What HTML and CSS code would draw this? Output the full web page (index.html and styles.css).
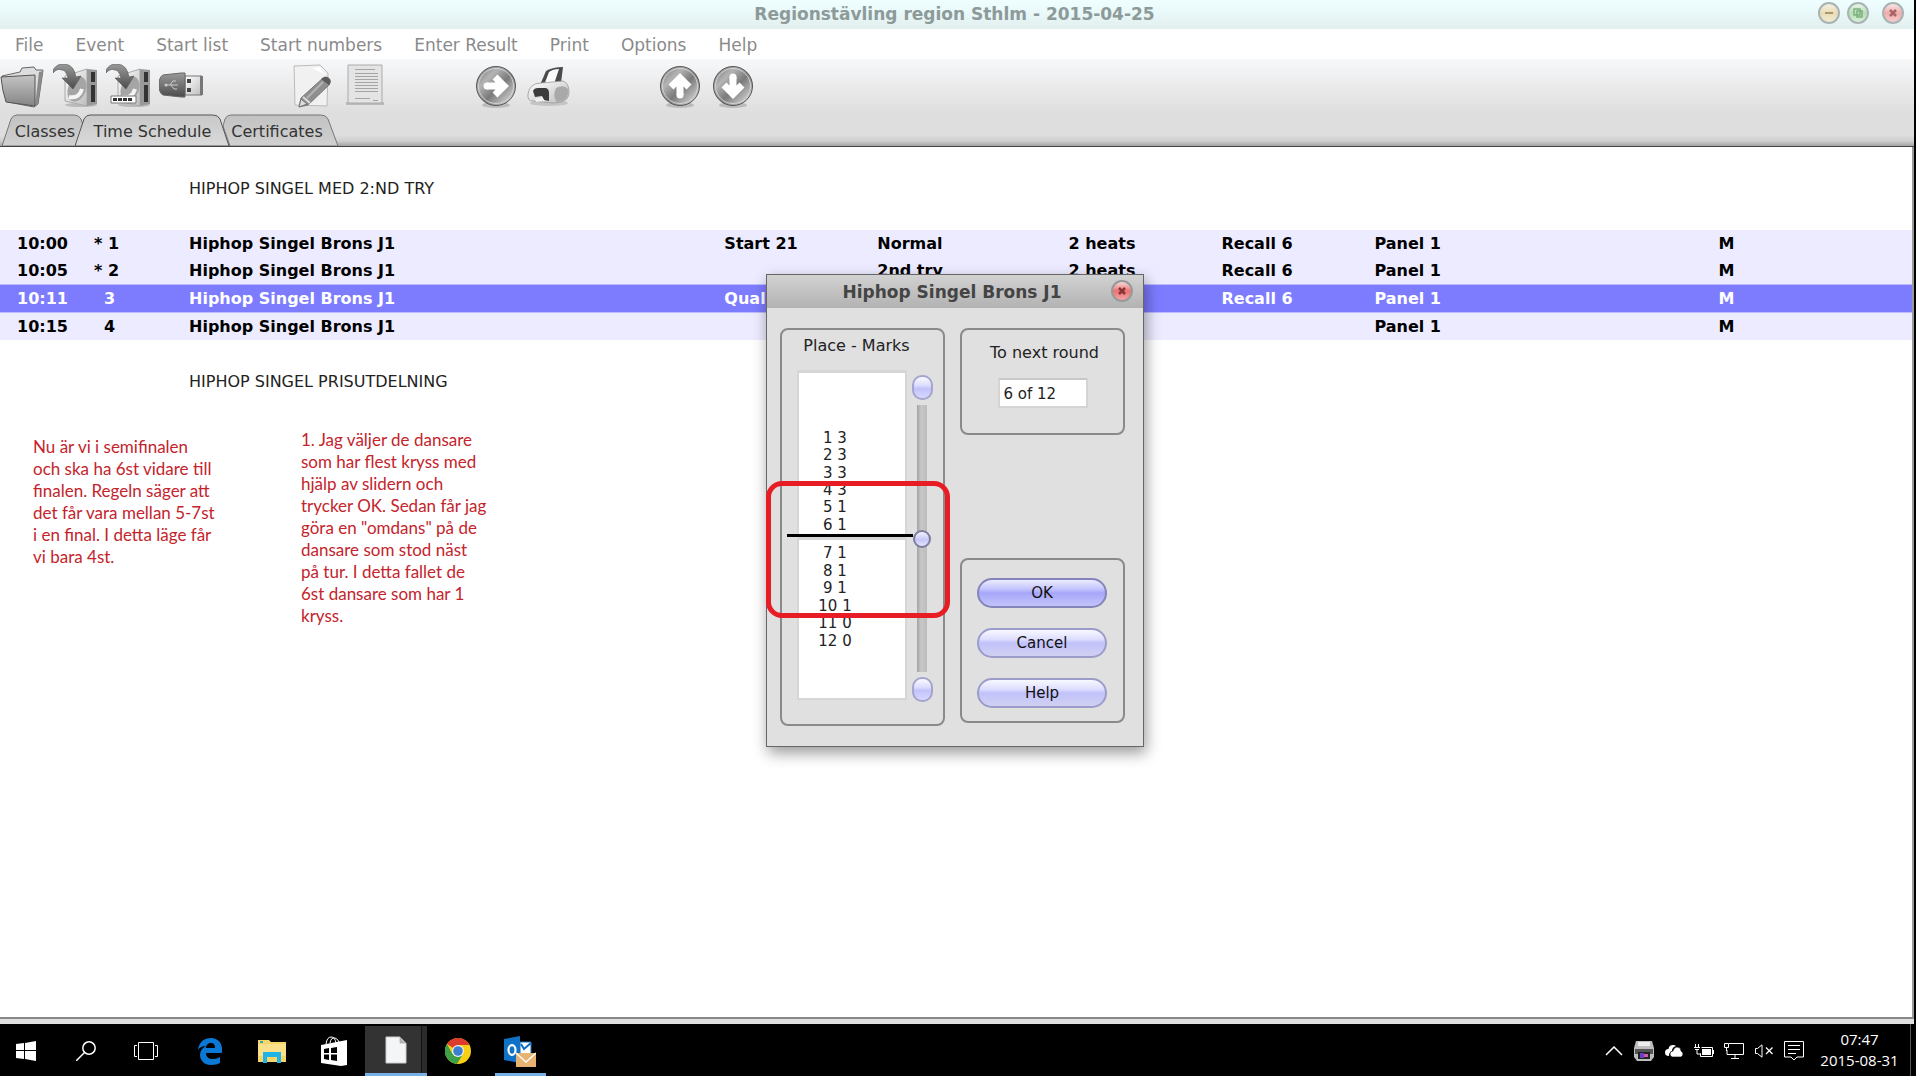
FILE: index.html
```html
<!DOCTYPE html>
<html lang="sv">
<head>
<meta charset="utf-8">
<title>Regionstävling region Sthlm - 2015-04-25</title>
<link rel="stylesheet" href="styles.css">
</head>
<body>
<svg class="defs" aria-hidden="true">
  <defs>
    <linearGradient id="g-dark" x1="0" y1="0" x2="0" y2="1"><stop offset="0" stop-color="#9a9a9a"/><stop offset="1" stop-color="#4c4c4c"/></linearGradient>
    <linearGradient id="g-folder" x1="0" y1="0" x2="0" y2="1"><stop offset="0" stop-color="#c4c4c4"/><stop offset="1" stop-color="#858585"/></linearGradient>
    <linearGradient id="g-light" x1="0" y1="0" x2="1" y2="1"><stop offset="0" stop-color="#fff"/><stop offset="1" stop-color="#bdbdbd"/></linearGradient>
    <linearGradient id="g-ball" x1="0" y1="0" x2="1" y2="1"><stop offset="0" stop-color="#6f6f6f"/><stop offset=".3" stop-color="#b4b4b4"/><stop offset=".55" stop-color="#7a7a7a"/><stop offset=".85" stop-color="#c8c8c8"/><stop offset="1" stop-color="#777"/></linearGradient>
    <linearGradient id="g-tab" x1="0" y1="0" x2="0" y2="1"><stop offset="0" stop-color="#c2c2c2"/><stop offset="1" stop-color="#d0d0d0"/></linearGradient>
    <linearGradient id="g-tab-on" x1="0" y1="0" x2="0" y2="1"><stop offset="0" stop-color="#c8c8c8"/><stop offset="1" stop-color="#dadada"/></linearGradient>
    <symbol id="i-disk" viewBox="0 0 44 44">
      <ellipse cx="28" cy="41" rx="16" ry="2" fill="#bbb"/>
      <path d="M12 12 34 5 34 42 12 37Z" fill="url(#g-light)" stroke="#aaa"/>
      <path d="M34 5 44 6 44 40 34 42Z" fill="#999"/>
      <path d="M38 8h4v10h-4zM38 21h4v17h-4z" fill="#333"/>
      <ellipse cx="24" cy="25" rx="9" ry="13" fill="#a5a5a5" transform="rotate(20 24 25)"/>
      <path d="M16 33q10 2 13-8" fill="none" stroke="#f4f4f4" stroke-width="4"/>
      <path d="M0 6Q4-1 12 0q9 1 11 13l5-1-8 13L9 14l6 0Q13 6 9 6 4 4 0 9Z" fill="url(#g-dark)" stroke="#555" stroke-width=".6"/>
    </symbol>
    <symbol id="i-ball" viewBox="0 0 44 44">
      <ellipse cx="22" cy="41" rx="14" ry="3" fill="#bbb"/>
      <circle cx="22" cy="22" r="19.500" fill="url(#g-ball)" stroke="#555"/>
      <circle cx="22" cy="22" r="17.500" fill="none" stroke="#d2d2d2"/>
    </symbol>
  </defs>
</svg>

<div class="screen">
  <main class="window">
    <header class="titlebar">
      <h1>Regionstävling region Sthlm - 2015-04-25</h1>
      <div class="window-buttons">
        <button class="ball ball-min" aria-label="Minimize"><svg viewBox="0 0 22 22"><path d="M7 11h8" stroke="#a89a6c" stroke-width="2"/></svg></button>
        <button class="ball ball-max" aria-label="Restore"><svg viewBox="0 0 22 22" fill="none" stroke="#7fae7f" stroke-width="1.500"><rect x="7" y="7" width="6" height="6"/><rect x="10" y="9" width="5" height="6"/></svg></button>
        <button class="ball ball-close" aria-label="Close"><svg viewBox="0 0 22 22"><path d="M8 8l6 6M14 8l-6 6" stroke="#a86464" stroke-width="2.500"/></svg></button>
      </div>
    </header>

    <nav class="menubar">
      <a href="#">File</a><a href="#">Event</a><a href="#">Start list</a><a href="#">Start numbers</a><a href="#">Enter Result</a><a href="#">Print</a><a href="#">Options</a><a href="#">Help</a>
    </nav>

    <div class="tools">
      <div class="toolbar">
        <div class="tool-group">
          <button class="tool" aria-label="Open"><svg viewBox="0 0 44 44"><path d="M2 12 20 8 22 4 34 3 36 6 43 6 38 40 34 43 8 38Z" fill="#ddd" stroke="#666"/><path d="M39 8 43 7 38 40 35 42Z" fill="#8a8a8a"/><path d="M1 13 35 11 35 42 6 38Q2 26 1 13Z" fill="url(#g-folder)" stroke="#555"/></svg></button>
          <button class="tool" aria-label="Save"><svg viewBox="0 0 44 44"><use href="#i-disk"/></svg></button>
          <button class="tool" aria-label="Save as"><svg viewBox="0 0 44 44"><use href="#i-disk"/><path d="M5 32h25v7H5z" fill="#fff" stroke="#777"/><path d="M7 35.500h20" stroke="#333" stroke-width="3" stroke-dasharray="4 1"/></svg></button>
          <button class="tool" aria-label="Save to USB"><svg viewBox="0 0 44 44"><path d="M26 12h17v19H26z" fill="url(#g-light)" stroke="#777"/><path d="M41 12h3v19h-3z" fill="#777"/><path d="M28 15h4v4h-4zM28 24h4v4h-4z" fill="#444"/><path d="M4 11 22 9h4v24h-4L4 31Q0 29 0 21T4 11Z" fill="url(#g-dark)" stroke="#666"/><path d="M7 21h12M11 21l3-4h3M12 21l3 4h3" fill="none" stroke="#ccc"/><circle cx="7" cy="21" r="1.500" fill="#ccc"/></svg></button>
        </div>
        <div class="tool-group">
          <button class="tool" aria-label="Edit"><svg viewBox="0 0 44 44"><path d="M4 2 30 1 38 9 37 42 5 41Z" fill="#f1f1f1" stroke="#bbb"/><path d="M22 4 34 10 30 3Z" fill="#fff"/><path d="M33 14 40 20 18 41 9 43 11 34Z" fill="#8f8f8f" stroke="#777"/><path d="M13 33 20 39" stroke="#ddd" stroke-width="2"/><path d="M9 43 11 35 17 40Z" fill="#ddd" stroke="#777"/><path d="M31 15q5-5 9 0 2 3-1 6Z" fill="#5c5c5c"/><path d="M17 34 33 18" stroke="#b4b4b4" stroke-width="2"/></svg></button>
          <button class="tool" aria-label="List"><svg viewBox="0 0 44 44"><path d="M3 38h38v3H3z" fill="#bbb"/><path d="M5 1h34v38H5z" fill="#e4e4e4" stroke="#aaa"/><path d="M12 5.500h20M12 9.500h23M12 12.500h23M12 15.500h23M12 18.500h23M12 21.500h23M12 24.500h23M12 27.500h23M12 34.500h15M30 36.500h5" stroke="#a4a4a4"/></svg></button>
        </div>
        <div class="tool-group">
          <button class="tool" aria-label="Next"><svg viewBox="0 0 44 44"><use href="#i-ball"/><path d="M13 22h13M21 13l9 9-9 9" fill="none" stroke="#fff" stroke-width="7"/><circle cx="13" cy="22" r="3.500" fill="#fff"/></svg></button>
          <button class="tool" aria-label="Print"><svg viewBox="0 0 44 44"><ellipse cx="22" cy="39" rx="19" ry="3" fill="#c4c4c4"/><path d="M13 21 19 7Q26 3 36 3L34 19 28 21Z" fill="#4a4a4a"/><path d="M17 21 22 8Q26 5 32 5L27 20Z" fill="#fafafa"/><path d="M5 22Q8 19 14 19L36 17Q42 19 42 28 42 36 34 38L26 39 6 37Q0 37 1 30 2 24 5 22Z" fill="url(#g-light)" stroke="#999" stroke-width=".8"/><path d="M6 27Q7 24 11 24H19Q22 25 22 29V37L17 36 15 32 8 33Z" fill="#3c3c3c"/><path d="M29 24Q37 20 41 25 42 33 37 36L30 38Q25 33 29 24Z" fill="#a9a9a9"/><path d="M8 35 15 33 18 37 9 38Z" fill="#f0f0f0"/></svg></button>
        </div>
        <div class="tool-group">
          <button class="tool" aria-label="Up"><svg viewBox="0 0 44 44"><use href="#i-ball"/><path d="M22 31V18M13 23l9-9 9 9" fill="none" stroke="#fff" stroke-width="7"/><circle cx="22" cy="31" r="3.500" fill="#fff"/></svg></button>
          <button class="tool" aria-label="Down"><svg viewBox="0 0 44 44"><use href="#i-ball"/><path d="M22 13V26M13 21l9 9 9-9" fill="none" stroke="#fff" stroke-width="7"/><circle cx="22" cy="13" r="3.500" fill="#fff"/></svg></button>
        </div>
      </div>
      <div class="tabs">
        <button class="tab tab-classes"><svg viewBox="0 0 84 32"><path d="M0 32 9 5Q11 1 15 1H72Q77 1 79 5L84 20V32Z" fill="url(#g-tab)" stroke="#777"/></svg><span>Classes</span></button>
        <button class="tab tab-schedule"><svg viewBox="0 0 155 32"><path d="M0 32 9 5Q11 1 15 1H138Q143 1 145 5L154 32Z" fill="url(#g-tab-on)" stroke="#555"/></svg><span>Time Schedule</span></button>
        <button class="tab tab-certs"><svg viewBox="0 0 116 32"><path d="M7 32 0 12 2 5Q4 1 8 1H98Q103 1 105 5L115 32Z" fill="url(#g-tab)" stroke="#777"/></svg><span>Certificates</span></button>
      </div>
    </div>

    <section class="content">
      <h2>HIPHOP SINGEL MED 2:ND TRY</h2>
      <table class="schedule">
        <colgroup><col class="c-time"><col class="c-num"><col class="c-name"><col class="c-start"><col class="c-type"><col class="c-heats"><col class="c-recall"><col class="c-panel"><col></colgroup>
        <tbody>
          <tr><td>10:00</td><td>* 1</td><td>Hiphop Singel Brons J1</td><td>Start 21</td><td>Normal</td><td>2 heats</td><td>Recall 6</td><td>Panel 1</td><td>M</td></tr>
          <tr><td>10:05</td><td>* 2</td><td>Hiphop Singel Brons J1</td><td></td><td>2nd try</td><td>2 heats</td><td>Recall 6</td><td>Panel 1</td><td>M</td></tr>
          <tr class="selected"><td>10:11</td><td class="plain">3</td><td>Hiphop Singel Brons J1</td><td>Qual</td><td></td><td></td><td>Recall 6</td><td>Panel 1</td><td>M</td></tr>
          <tr><td>10:15</td><td class="plain">4</td><td>Hiphop Singel Brons J1</td><td></td><td></td><td></td><td></td><td>Panel 1</td><td>M</td></tr>
        </tbody>
      </table>
      <h2>HIPHOP SINGEL PRISUTDELNING</h2>
      <div class="notes">
        <p class="note note-lower">Nu är vi i semifinalen<br>och ska ha 6st vidare till<br>finalen. Regeln säger att<br>det får vara mellan 5-7st<br>i en final. I detta läge får<br>vi bara 4st.</p>
        <p class="note">1. Jag väljer de dansare<br>som har flest kryss med<br>hjälp av slidern och<br>trycker OK. Sedan får jag<br>göra en "omdans" på de<br>dansare som stod näst<br>på tur. I detta fallet de<br>6st dansare som har 1<br>kryss.</p>
      </div>
    </section>

    <section class="dialog" role="dialog" aria-labelledby="dialog-title">
      <header class="dialog-bar">
        <h2 id="dialog-title">Hiphop Singel Brons J1</h2>
        <button class="ball ball-dialog" aria-label="Close"><svg viewBox="0 0 22 22"><path d="M8 8l6 6M14 8l-6 6" stroke="#8c3434" stroke-width="2.500"/></svg></button>
      </header>
      <div class="dialog-body">
        <div class="group marks">
          <label for="cut" class="marks-label">Place - Marks</label>
          <div class="marks-row">
            <div class="lists">
              <ol class="list list-in"><li>1 3</li><li>2 3</li><li>3 3</li><li>4 3</li><li>5 1</li><li>6 1</li></ol>
              <hr>
              <ol class="list list-out"><li>7 1</li><li>8 1</li><li>9 1</li><li>10 1</li><li>11 0</li><li>12 0</li></ol>
            </div>
            <div class="slider">
              <button class="step" aria-label="Up one"></button>
              <input id="cut" type="range" min="0" max="12" value="6">
              <button class="step" aria-label="Down one"></button>
            </div>
          </div>
        </div>
        <div class="side">
          <div class="group next">
            <label for="next">To next round</label>
            <input id="next" type="text" value="6 of 12">
          </div>
          <div class="group actions">
            <button class="pill pill-ok">OK</button>
            <button class="pill">Cancel</button>
            <button class="pill">Help</button>
          </div>
        </div>
      </div>
      <div class="highlight"></div>
    </section>
  </main>

  <footer class="taskbar">
    <div class="apps">
      <button class="task task-start" aria-label="Start"><svg width="20" height="20" viewBox="0 0 20 20" fill="#fff"><path d="M0 3 8 2V9H0zM9 2 20 0V9H9zM0 10H8V18L0 17zM9 10H20V20L9 18z"/></svg></button>
      <button class="task task-small" aria-label="Search"><svg width="20" height="20" viewBox="0 0 20 20" fill="none" stroke="#fff" stroke-width="1.500"><circle cx="13" cy="7" r="6.200"/><path d="M8.500 11.500 0 20"/></svg></button>
      <button class="task task-small task-view" aria-label="Task view"><svg width="24" height="20" viewBox="0 0 24 20" fill="none" stroke="#fff"><path d="M4.500 1.500h15v17h-15zM3 4.500H.500v11H3M21 4.500h2.500v11H21"/></svg></button>
      <button class="task" aria-label="Edge"><svg width="26" height="28" viewBox="0 0 26 28"><path d="M1 13C2 5 7 1 14 1c7 0 11 5 11 11v4H9c0 4 3 6 7 6 3 0 5-1 7-2v6c-2 1-5 2-9 2C7 28 3 23 3 18c0-4 2-7 6-9-4 0-7 2-8 4ZM9 11h9c0-3-1-5-4-5s-5 2-5 5Z" fill="#0a78d4"/></svg></button>
      <button class="task" aria-label="File Explorer"><svg width="28" height="24" viewBox="0 0 28 24"><path d="M0 1h11l2 2h15v20H0z" fill="#f6d36b"/><path d="M0 5h28v12H0z" fill="#fbe08a"/><path d="M2 2h3v2H2z" fill="#3aa"/><path d="M5 24V13h18v11h-4v-6H9v6z" fill="#1fb4e6"/></svg></button>
      <button class="task" aria-label="Store"><svg width="26" height="30" viewBox="0 0 26 30"><path d="M5 8Q6 1 10 1q4 0 5 6M9 7q1-6 5-5 3 1 4 4" fill="none" stroke="#fff"/><path d="M0 9 26 4V29L20 30 0 27Z" fill="#fff"/><path d="M3 13 8 12V17H3zM10 12 16 11V17H10zM3 18.500H8V24L3 23zM10 18.500H16V25L10 24z" fill="#000"/></svg></button>
      <button class="task task-active" aria-label="Document"><svg width="22" height="28" viewBox="0 0 22 28"><path d="M1 1h14l6 6v20H1z" fill="#f4f5f7" stroke="#ccc"/><path d="M15 1v6h6z" fill="#bbb" stroke="#888" stroke-width=".5"/></svg></button>
      <button class="task" aria-label="Chrome"><svg width="26" height="26" viewBox="0 0 26 26"><circle cx="13" cy="13" r="13" fill="#f9cf16"/><path d="M13 13 2 6A13 13 0 0 1 24.500 7H13Z" fill="#dc3a2c"/><path d="M13 13 7.500 16 2 6A13 13 0 0 0 12 26L17.500 17Z" fill="#3da048"/><circle cx="13" cy="13" r="6" fill="#f2f2f2"/><circle cx="13" cy="13" r="4.800" fill="#3c7fd0"/></svg></button>
      <button class="task task-open" aria-label="Outlook"><svg width="32" height="32" viewBox="0 0 32 32"><path d="M16 7h11v14H16z" fill="#fff" stroke="#0f6cbd"/><path d="M17 9 20 14 27 8" fill="none" stroke="#0f6cbd" stroke-width="2"/><path d="M0 4 16 1V28L0 25Z" fill="#0f72c6"/><ellipse cx="8" cy="15" rx="3.500" ry="4.800" fill="none" stroke="#fff" stroke-width="2.200"/><path d="M12 18h20v14H12z" fill="#e8b273"/><path d="M12 18 22 27 32 18" fill="none" stroke="#fff" stroke-width="1.500"/></svg></button>
    </div>
    <div class="tray">
      <button class="tray-item" aria-label="Show hidden icons"><svg width="18" height="10" viewBox="0 0 18 10"><path d="M1 9 9 1 17 9" fill="none" stroke="#fff" stroke-width="1.500"/></svg></button>
      <button class="tray-item" aria-label="Printer"><svg width="20" height="20" viewBox="0 0 20 20"><path d="M2 0h16l2 7v9l-3 4H3l-3-4V7z" fill="#bdbdbd"/><path d="M4 1h12v4H4z" fill="#eee"/><path d="M1 8h18v5H1z" fill="#555"/><path d="M4 11h12v7H4z" fill="#222"/><path d="M6 12h4v5H6z" fill="#6a3fc0"/><path d="M10 13h4v3h-4z" fill="#d05ab0"/></svg></button>
      <button class="tray-item" aria-label="OneDrive"><svg width="18" height="14" viewBox="0 0 18 14"><path d="M4 12Q0 12 0 8.500 0 5 3.500 5 4 1 8 1q2 0 3 1-4 1-4 5-3 1-3 5Z" fill="#fff"/><path d="M7 13q-2-1-2-3 0-3 3-3 1-4 4-4 4 0 4 4 2 1 2 3t-2 3Z" fill="#fff" stroke="#000" stroke-width=".6"/></svg></button>
      <button class="tray-item" aria-label="Battery"><svg width="20" height="14" viewBox="0 0 20 14"><path d="M7.500 3.500h11v9h-12v-3" fill="none" stroke="#fff"/><path d="M8 5h9v6H8z" fill="#fff"/><path d="M1.500 0v3M4.500 0v3M0 3.500h6M1 5.500h4M3 5v5h4M19.500 6v4" stroke="#fff" fill="none"/></svg></button>
      <button class="tray-item" aria-label="Network"><svg width="20" height="16" viewBox="0 0 20 16" fill="none" stroke="#fff"><path d="M5 .500h14.500v11H3V7M11 12v3M7 15.500h8M.500.500h4v4h-4zM2.500 5v3"/></svg></button>
      <button class="tray-item" aria-label="Volume muted"><svg width="18" height="14" viewBox="0 0 18 14" fill="none" stroke="#fff"><path d="M.500 4.500h2L7 .800v12.400L2.500 9.500h-2z"/><path d="M11 3.500 17.500 10M17.500 3.500 11 10" stroke-width="1.300"/></svg></button>
      <button class="tray-item" aria-label="Notifications"><svg width="20" height="20" viewBox="0 0 20 20" fill="none" stroke="#fff"><path d="M.500.500h19v15.500H13L10 19 7 16H.500zM4 4.500h12M4 8.500h12M4 12.500h8"/></svg></button>
      <time class="clock" datetime="2015-08-31T07:47"><span>07:47</span><span>2015-08-31</span></time>
    </div>
  </footer>
</div>
</body>
</html>
```
FILE: styles.css
```css
* { box-sizing: border-box; }

body {
  margin: 0;
  padding: 0 4px 4px 0;
  background: #fff;
  font-family: "DejaVu Sans", Verdana, sans-serif;
  font-size: 16px;
}

h1, h2, p, ol, hr { margin: 0; padding: 0; }
button { border: 0; padding: 0; margin: 0; background: none; font: inherit; color: inherit; }
svg { display: block; }
.defs { position: absolute; width: 0; height: 0; }

.screen {
  display: flex;
  flex-direction: column;
  min-height: calc(100vh - 4px);
  background: #000;
}

.window {
  position: relative;
  flex: 1;
  display: flex;
  flex-direction: column;
  margin-right: 2px;
  padding-bottom: 5px;
  background: #e0e0e0;
}

/* Title bar */
.titlebar {
  position: relative;
  display: flex;
  justify-content: center;
  height: 29px;
  padding-right: 5px;
  background: linear-gradient(#efffff, #e2efef);
}
.titlebar h1 { font-size: 17px; line-height: 28px; color: #8d9a9a; }
.window-buttons { position: absolute; top: 2px; right: 10px; display: flex; gap: 7px; }
.ball {
  width: 22px;
  height: 22px;
  border: 2px solid #a9b3b3;
  border-radius: 50%;
}
.ball svg { width: 22px; height: 22px; margin: -2px; }
.ball-min { background: linear-gradient(#f4f0e4, #e9dcb4 50%, #f3ecd2); }
.ball-max { background: linear-gradient(#eaf6ea, #b5dfb5 50%, #d6f0d6); }
.ball-close { margin-left: 6px; background: linear-gradient(#f8e6e6, #f0acac 50%, #f7cccc); }

/* Menu */
.menubar { display: flex; gap: 32px; height: 30px; padding-left: 15px; background: #fff; }
.menubar a { font-size: 17px; line-height: 33px; color: #8a8a8a; text-decoration: none; }

/* Toolbar and tabs */
.tools {
  height: 88px;
  border-bottom: 1px solid #444;
  background: linear-gradient(#f7f8fa, #dedede 54px, #dedede 76px, #cfcfcf 82px, #a4a4a4 87px);
}
.toolbar { display: flex; gap: 87px; height: 55px; padding-top: 5px; }
.tool-group { display: flex; gap: 9px; }
.tool, .tool svg { width: 44px; height: 44px; }
.tabs { display: flex; height: 32px; padding-left: 2px; }
.tab { position: relative; height: 32px; font-size: 16px; color: #333; }
.tab svg { position: absolute; top: 0; left: 0; width: 100%; height: 32px; }
.tab span { position: relative; display: block; line-height: 36px; text-align: center; }
.tab-classes { width: 84px; }
.tab-schedule { width: 155px; margin-left: -11px; z-index: 1; }
.tab-certs { width: 116px; margin-left: -7px; }
.tab-classes span { padding-left: 2px; }
.tab-certs span { padding-right: 8px; }

/* Schedule */
.content {
  flex: 1;
  padding-top: 28px;
  border-right: 2px solid #999;
  border-bottom: 2px solid #888;
  background: #fff;
}
.content h2 { padding-left: 189px; font-size: 16px; font-weight: normal; line-height: 28px; color: #222; }
.schedule {
  width: 100%;
  margin: 27px 0 28px;
  border-collapse: collapse;
  table-layout: fixed;
  background: #ecebff;
  font-weight: bold;
  color: #000;
}
.schedule td { height: 27px; padding: 1px 0 0; line-height: 26px; white-space: nowrap; }
.schedule td:first-child { padding-left: 17px; }
.schedule .plain { padding-left: 10px; }
.schedule .selected { background: #7d7cff; color: #fff; }
.schedule .selected td { height: 29px; box-shadow: inset 0 1px #bcbbff, inset 0 -1px #bcbbff; }
.c-time { width: 94px; }
.c-num { width: 95px; }
.c-name { width: 28%; }
.c-start { width: 8%; }
.c-type { width: 10%; }
.c-heats, .c-recall { width: 8%; }
.c-panel { width: 18%; }

.notes { display: flex; gap: 68px; padding: 33px; }
.note { min-width: 200px; font-family: Lato, Carlito, sans-serif; font-size: 17px; line-height: 22px; color: #c4242c; }
.note-lower { padding-top: 7px; }

/* Dialog */
.dialog {
  position: absolute;
  top: 274px;
  left: calc(50% - 191px);
  width: 378px;
  border: 1px solid #666;
  background: #e0e0e0;
  box-shadow: 2px 6px 14px rgba(0, 0, 0, .4);
  color: #222;
}
.dialog-bar {
  position: relative;
  display: flex;
  justify-content: center;
  height: 33px;
  padding-right: 6px;
  background: linear-gradient(#d2d2d2, #b2b2b2);
}
.dialog-bar h2 { font-size: 17px; line-height: 34px; color: #444; }
.ball-dialog {
  position: absolute;
  top: 5px;
  right: 10px;
  border-color: #999;
  background: linear-gradient(#f7dada, #e87474 50%, #f4a4a4);
}
.dialog-body { display: flex; gap: 15px; padding: 20px 18px 20px 13px; }
.group { width: 165px; border: 2px solid #8a8a8a; border-radius: 8px; }

.marks { display: flex; flex-direction: column; height: 398px; }
.marks-label { padding-right: 12px; line-height: 31px; text-align: center; }
.marks-row { display: flex; gap: 4px; padding: 9px 0 0 5px; }
.lists { width: 126px; }
.list {
  display: grid;
  grid-auto-rows: 1fr;
  width: 110px;
  margin-left: 10px;
  border: 2px solid #d6d6d6;
  border-top-width: 3px;
  background: #fff;
  list-style: none;
  font-size: 15px;
  line-height: 17px;
  text-align: center;
}
.list-in { height: 164px; padding: 57px 34px 0 0; border-bottom: 0; }
.list-out { height: 163px; padding: 5px 34px 48px 0; }
.lists hr { height: 3px; border: 0; background: #000; }

.slider { display: flex; flex-direction: column; align-items: center; gap: 5px; width: 22px; margin: 5px 0 0 -6px; }
.step {
  width: 21px;
  height: 25px;
  border: 2px solid #a4a4cf;
  border-radius: 10px;
  background: linear-gradient(#fafaff, #dcdcff 40%, #c2c2fa 55%, #d8d8ff);
}
.slider input {
  appearance: none;
  writing-mode: vertical-lr;
  width: 20px;
  height: 267px;
  margin: 0;
  background: linear-gradient(90deg, transparent 5px, #a2a2a2 5px, #c8c8c8 9px, #bcbcbc 15px, transparent 15px);
}
.slider input::-webkit-slider-thumb {
  appearance: none;
  width: 18px;
  height: 18px;
  border: 2px solid #7c7c9c;
  border-radius: 50%;
  background: linear-gradient(#f4f4ff, #c6c6fa 55%, #e4e4ff);
}

.side { display: flex; flex-direction: column; justify-content: space-between; padding-bottom: 3px; }
.next { display: flex; flex-direction: column; align-items: center; height: 107px; padding-top: 7px; }
.next label { padding-left: 4px; line-height: 31px; }
.next input {
  width: 90px;
  height: 30px;
  margin-top: 10px;
  padding: 2px 0 0 4px;
  border: 2px solid #d4d4d4;
  border-top-color: #c8c8c8;
  background: #fff;
  font: inherit;
  font-size: 15px;
  color: #222;
}
.actions { display: flex; flex-direction: column; gap: 20px; height: 165px; padding: 18px 15px; }
.pill {
  width: 130px;
  height: 30px;
  flex: none;
  border: 2px solid #9c9ccb;
  border-radius: 15px;
  background: linear-gradient(#f8f8ff, #dedeff 35%, #c2c2fb 50%, #d0d0f2);
  font-size: 15px;
  line-height: 26px;
  color: #111;
}
.pill-ok { border-color: #8484bb; background: linear-gradient(#ececff, #c4c4ff 35%, #a6a6fb 50%, #c4c4fa); }

.highlight {
  position: absolute;
  top: 206px;
  left: -1px;
  width: 184px;
  height: 137px;
  border: 5px solid #e81c24;
  border-radius: 16px;
  pointer-events: none;
}

/* Taskbar */
.taskbar { display: flex; justify-content: space-between; height: 52px; background: #000; color: #fff; }
.apps, .tray { display: flex; }
.task { display: flex; align-items: center; justify-content: center; width: 62px; height: 52px; padding-top: 2px; }
.task-start { width: 52px; margin-right: 4px; }
.task-small { width: 60px; }
.task-view { margin-right: 3px; }
.task-active {
  margin-top: 2px;
  height: 50px;
  padding: 0;
  border-bottom: 3px solid #76b0e4;
  background: linear-gradient(90deg, #333 56px, #111 56px, #111 57px, #2b2b2b 57px);
}
.task-open { background: linear-gradient(#76b0e4, #76b0e4) center bottom / 51px 3px no-repeat; }
.tray { margin-right: 5px; border-right: 1px solid #555; }
.tray-item { display: flex; align-items: center; justify-content: center; width: 30px; padding-top: 2px; }
.clock {
  display: flex;
  flex-direction: column;
  justify-content: center;
  width: 101px;
  font-family: "Open Sans", "Noto Sans", sans-serif;
  font-size: 15px;
  line-height: 21px;
  text-align: center;
}
```
